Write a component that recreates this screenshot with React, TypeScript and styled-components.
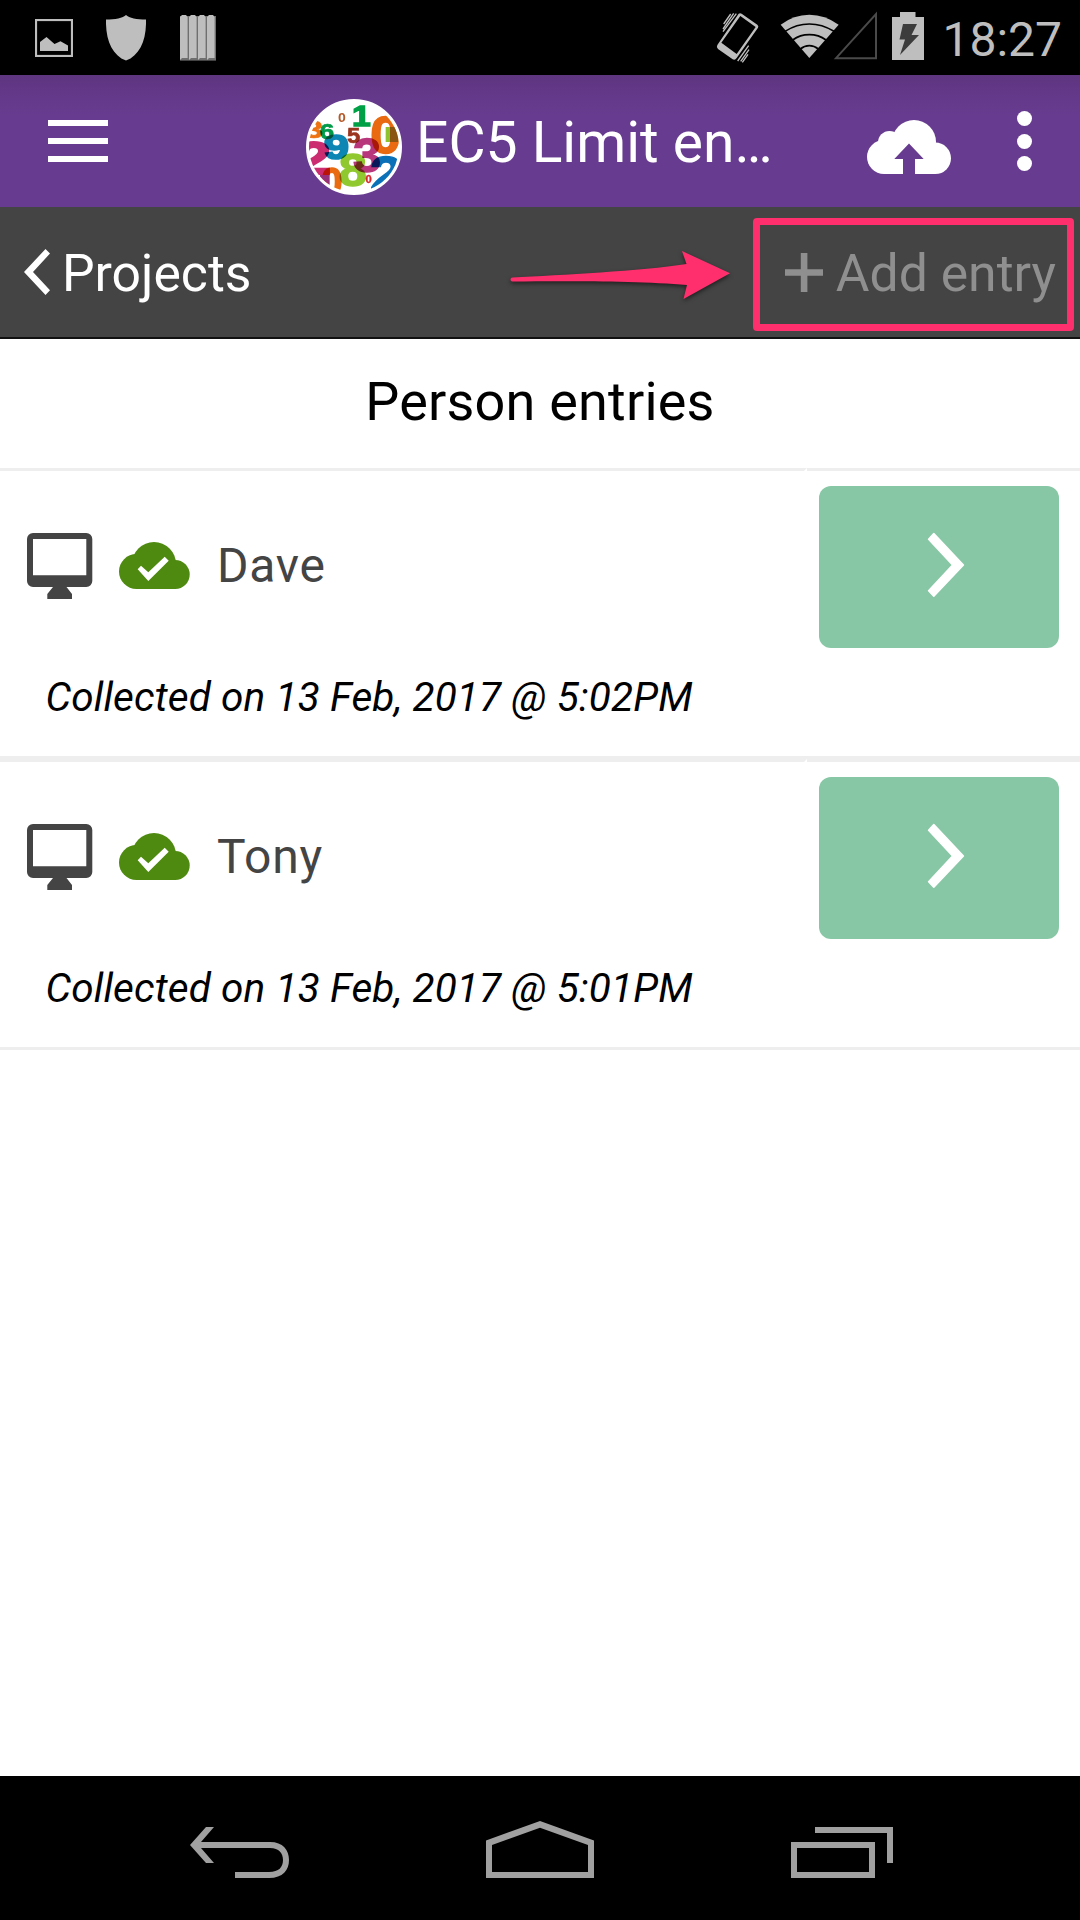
import React from "react";
import styled, { createGlobalStyle } from "styled-components";

const GlobalStyle = createGlobalStyle`
  * { box-sizing: border-box; }
  body { margin: 0; background: #fff; }
`;

const Screen = styled.div`
  display: flex;
  flex-direction: column;
  width: 1080px;
  height: 1920px;
  background: #fff;
  color: #000;
  font-family: Roboto, "Noto Sans", sans-serif;
  overflow: hidden;
  white-space: nowrap;
`;

const Icon = styled.svg`
  display: block;
  flex: none;
`;

const StatusBar = styled.div`
  display: flex;
  justify-content: space-between;
  flex: none;
  height: 75px;
  padding: 0 18px 0 35px;
  background: #000;
`;

const StatusGroup = styled.div`
  display: flex;
  align-items: flex-start;
`;

const StatusSlot = styled.div<{ $top: number; $gap?: number }>`
  padding-top: ${(p) => p.$top}px;
  margin-left: ${(p) => p.$gap ?? 0}px;
`;

const Clock = styled.div`
  margin-left: 18px;
  padding-top: 5px;
  font-size: 48px;
  line-height: 70px;
  color: #bebebe;
`;

const Header = styled.header`
  display: flex;
  align-items: center;
  flex: none;
  height: 132px;
  padding: 0 48px;
  background: linear-gradient(#5e357f 0, #633889 18px, #673b8f 40px);
  color: #fff;
`;

const MenuButton = styled.div`
  display: flex;
  flex-direction: column;
  gap: 12px;
  width: 60px;
`;

const MenuLine = styled.span`
  height: 6px;
  background: #fff;
`;

const Logo = styled.div`
  flex: none;
  width: 96px;
  height: 96px;
  margin: 12px 0 0 198px;
  border: 3px solid #fff;
  border-radius: 50%;
  background: #fff;
  overflow: hidden;
  isolation: isolate;
`;

const Digit = styled.text`
  font-family: "Liberation Sans", Arial, sans-serif;
  font-weight: 700;
  mix-blend-mode: multiply;
`;

const Title = styled.h1`
  width: 370px;
  margin: 4px 0 0 14px;
  font-size: 57px;
  font-weight: 400;
  line-height: 68px;
`;

const UploadButton = styled.div`
  margin: 12px 0 0 81px;
`;

const MoreButton = styled.div`
  display: flex;
  flex-direction: column;
  gap: 7.5px;
  margin-left: 66px;
`;

const Dot = styled.span`
  width: 15px;
  height: 15px;
  border-radius: 50%;
  background: #fff;
`;

const SubBar = styled.nav`
  position: relative;
  display: flex;
  justify-content: space-between;
  align-items: center;
  flex: none;
  height: 132px;
  padding: 0 24px;
  border-bottom: 2px solid #111;
  background: #444;
`;

const BarLink = styled.div<{ $dim?: boolean; $gap: number }>`
  display: flex;
  align-items: center;
  gap: ${(p) => p.$gap}px;
  color: ${(p) => (p.$dim ? "#8f8f8f" : "#fff")};
`;

const BarLabel = styled.span`
  padding-top: 3px;
  font-size: 51.7px;
  line-height: 64px;
`;

const Highlight = styled.div`
  position: absolute;
  left: 753px;
  top: 11px;
  width: 321px;
  height: 113px;
  border: 7px solid #ff2f6e;
  border-radius: 4px;
`;

const Pointer = styled.div`
  position: absolute;
  left: 505px;
  top: 38px;
  filter: drop-shadow(0 2px 2px rgba(0, 0, 0, 0.55));
`;

const ListTitle = styled.h2`
  flex: none;
  height: 129px;
  margin: 0;
  padding-bottom: 4px;
  font-size: 54px;
  font-weight: 400;
  line-height: 125px;
  letter-spacing: 0.2px;
  text-align: center;
`;

const Entry = styled.article`
  display: flex;
  flex: none;
  height: 291px;
  border-bottom: 3px solid #eee;
`;

const EntryMain = styled.div`
  width: 807px;
  border-top: 3px solid #eee;
  border-right: 3px solid #fff;
`;

const EntryHead = styled.div`
  display: flex;
  align-items: flex-start;
  height: 188px;
  padding: 62px 0 0 27px;
`;

const SyncedSlot = styled.div`
  margin: 9px 0 0 26px;
`;

const EntryName = styled.div`
  margin-left: 27px;
  padding-top: 4px;
  font-size: 48px;
  line-height: 58px;
  letter-spacing: 0.8px;
  color: #444;
`;

const Collected = styled.div`
  padding-left: 45.5px;
  font-size: 40.5px;
  font-style: italic;
  line-height: 76px;
  letter-spacing: 0.13px;
`;

const EntryAction = styled.div`
  flex: 1;
  padding: 15px 21px 0 12px;
  border-top: 3px solid #eee;
`;

const OpenButton = styled.div`
  display: flex;
  align-items: center;
  height: 162px;
  padding: 0 0 5px 108px;
  border-radius: 12px;
  background: #88c7a5;
`;

const Spacer = styled.div`
  flex: 1;
`;

const NavBar = styled.footer`
  display: flex;
  flex: none;
  align-items: flex-end;
  gap: 197px;
  height: 144px;
  padding: 0 0 42px 190px;
  background: #000;
`;

/* x is the left edge of the glyph, w its drawn width, b the extra boldness */
const digits = [
  { t: "3", x: 18, y: 145, s: 74, w: 47, c: "#ee7211", b: 2 },
  { t: "0", x: 116, y: 95, s: 39, w: 20, c: "#b3592a", b: 0 },
  { t: "1", x: 160, y: 107, s: 88, w: 48, c: "#00a047", b: 4 },
  { t: "0", x: 217, y: 188, s: 158, w: 80, c: "#e96a10", b: 4 },
  { t: "6", x: 62, y: 148, s: 68, w: 37, c: "#009a49", b: 2 },
  { t: "5", x: 144, y: 159, s: 65, w: 34, c: "#9a3520", b: 2 },
  { t: "2", x: -2, y: 252, s: 140, w: 88, c: "#cb2d70", b: 6 },
  { t: "9", x: 77, y: 206, s: 104, w: 65, c: "#0d86b4", b: 5 },
  { t: "8", x: 122, y: 288, s: 138, w: 72, c: "#90c92f", b: 4 },
  { t: "3", x: 165, y: 247, s: 146, w: 72, c: "#b8377c", b: 4 },
  { t: "2", x: 216, y: 306, s: 152, w: 84, c: "#0a70b8", b: 4 },
  { t: "0", x: 68, y: 316, s: 118, w: 54, c: "#e96a10", b: 5 },
  { t: "0", x: 198, y: 279, s: 31, w: 16, c: "#d9252b", b: 1 },
];

function NumbersLogo() {
  return (
    <Logo>
      <Icon width="90" height="90" viewBox="27 36 270 270">
        {digits.map((d, i) => {
          const k = d.w / (0.475 * d.s);
          return (
            <Digit
              key={i}
              transform={`translate(${d.x - 0.04 * d.s * k} ${d.y}) scale(${k} 1)`}
              fontSize={d.s}
              fill={d.c}
              stroke={d.c}
              strokeWidth={d.b}
            >
              {d.t}
            </Digit>
          );
        })}
        <rect x="257" y="111" width="14" height="45" fill="#8fc22f" />
        <rect x="270" y="111" width="25" height="45" fill="#8a5510" />
        <rect x="60" y="255" width="29" height="50" fill="#96307a" />
      </Icon>
    </Logo>
  );
}

function EntryRow({ name, collected }: { name: string; collected: string }) {
  return (
    <Entry>
      <EntryMain>
        <EntryHead>
          <Icon width="66" height="66" viewBox="0 0 66 66" fill="#444">
            <path
              fillRule="evenodd"
              d="M6 0H59.3A6 6 0 0 1 65.3 6V48A6 6 0 0 1 59.3 54H39.5L45 61V66H20.3V61L26 54H6A6 6 0 0 1 0 48V6A6 6 0 0 1 6 0ZM6 6V42.3H59.3V6Z"
            />
          </Icon>
          <SyncedSlot>
            <Icon width="71" height="47" viewBox="0 0 71 47" fill="#4f8a10">
              <circle cx="17.5" cy="29.5" r="17.5" />
              <circle cx="35" cy="22" r="22" />
              <circle cx="56.2" cy="32.5" r="14.5" />
              <rect x="17" y="24" width="39.5" height="23" />
              <path fill="#fff" d="M18.7 27.3 22 23.7 29.3 30.3 45.7 14.7 49.7 18.7 29.3 39Z" />
            </Icon>
          </SyncedSlot>
          <EntryName>{name}</EntryName>
        </EntryHead>
        <Collected>{collected}</Collected>
      </EntryMain>
      <EntryAction>
        <OpenButton>
          <Icon width="38" height="66" viewBox="0 0 38 66">
            <path
              fill="#fff"
              stroke="#fff"
              strokeWidth="1.6"
              strokeLinejoin="round"
              d="M6.8 1.6 36.4 33 6.8 64.2 1.6 58.8 25.6 33 1.6 7.2Z"
            />
          </Icon>
        </OpenButton>
      </EntryAction>
    </Entry>
  );
}

export default function App() {
  return (
    <Screen>
      <GlobalStyle />
      <StatusBar>
        <StatusGroup>
          <StatusSlot $top={19}>
            <Icon width="38" height="38" viewBox="0 0 38 38">
              <rect x="1" y="1" width="36" height="36" fill="none" stroke="#bebebe" strokeWidth="2.2" />
              <path fill="#bebebe" d="M5 32V23L11.5 18 19.5 25 25.5 22.3 33 26.5V32Z" />
            </Icon>
          </StatusSlot>
          <StatusSlot $top={15} $gap={33}>
            <Icon width="40" height="46" viewBox="0 0 40 46" fill="#bebebe">
              <path d="M20 0C23 3 31 4.6 40 4.6 40.5 25 34 40 20 45.6 6 40 -.5 25 0 4.6 9 4.6 17 3 20 0Z" />
            </Icon>
          </StatusSlot>
          <StatusSlot $top={15} $gap={34}>
            <Icon width="36" height="46" viewBox="0 0 36 46">
              {[0, 9, 18, 27].map((x) => (
                <g key={x}>
                  <rect x={x} y="1" width="9" height="44.6" fill="#6f6f6f" />
                  <path fill="#bebebe" d={`M${x} 2 ${x + 2} 0H${x + 6}L${x + 7.6} 2V43H${x + 2}L${x} 45Z`} />
                </g>
              ))}
            </Icon>
          </StatusSlot>
        </StatusGroup>
        <StatusGroup>
          <StatusSlot $top={12}>
            <Icon width="43" height="51" viewBox="50 36 129 153">
              <path
                fill="#bebebe"
                fillRule="evenodd"
                d="M118 41Q122 38 127 41L174 74Q179 78 176 83L112 174Q107 182 100 178L56 147Q50 142 54 135ZM123 48 66 128 112 162 169 81Z"
              />
              <path
                stroke="#bebebe"
                strokeWidth="4"
                fill="none"
                d="M94 42 73 72M103 40 71 87M111 41 71 95M148 137 115 183M149 149 124 184M146 163 129 187"
              />
            </Icon>
          </StatusSlot>
          <StatusSlot $top={14} $gap={21}>
            <Icon width="60" height="45" viewBox="240 42 180 135">
              <path fill="#bebebe" d="M328 174 242 74Q281 44 328 44T416 74Z" />
              <path
                fill="none"
                stroke="#000"
                strokeWidth="5"
                d="M255 94Q290 72 328 72T402 94M278 120Q300 104 328 104T378 120M301 147Q313 137 328 137T355 147"
              />
            </Icon>
          </StatusSlot>
          <StatusSlot $top={11} $gap={-7}>
            <Icon width="45" height="49" viewBox="0 0 45 49">
              <path fill="none" stroke="#4a4a4a" strokeWidth="2" d="M43 3V47.2H3Z" />
            </Icon>
          </StatusSlot>
          <StatusSlot $top={12} $gap={14}>
            <Icon width="32" height="48" viewBox="0 0 32 48">
              <path fill="#bebebe" d="M8 0H23.5V5H32V48H0V5H8Z" />
              <path fill="#3c3c3c" d="M11 12H25L19.5 23H27L8 43 13 27.5H7.5Z" />
            </Icon>
          </StatusSlot>
          <Clock>18:27</Clock>
        </StatusGroup>
      </StatusBar>

      <Header>
        <MenuButton>
          <MenuLine />
          <MenuLine />
          <MenuLine />
        </MenuButton>
        <NumbersLogo />
        <Title>EC5 Limit en…</Title>
        <UploadButton>
          <Icon width="84" height="54" viewBox="0 0 84 54" fill="#fff">
            <circle cx="17" cy="37" r="17" />
            <circle cx="22.5" cy="22.5" r="11.5" />
            <circle cx="47" cy="22" r="22" />
            <circle cx="68.3" cy="38.3" r="15.7" />
            <rect x="17" y="24" width="51" height="30" />
            <path fill="#673b8f" d="M42 23.5 56.7 39H48V54H36V39H27.3Z" />
          </Icon>
        </UploadButton>
        <MoreButton>
          <Dot />
          <Dot />
          <Dot />
        </MoreButton>
      </Header>

      <SubBar>
        <BarLink $gap={12}>
          <Icon width="26" height="46" viewBox="0 0 26 46">
            <path fill="#fff" d="M21.5 0 26 4.5 9 23 26 41.2 21.5 46 0 23Z" />
          </Icon>
          <BarLabel>Projects</BarLabel>
        </BarLink>
        <BarLink $gap={13} $dim>
          <Icon width="38" height="39" viewBox="0 0 38 39">
            <path fill="#8f8f8f" d="M15.8 0H22.4V16.3H38V22.7H22.4V39H15.8V22.7H0V16.3H15.8Z" />
          </Icon>
          <BarLabel>Add entry</BarLabel>
        </BarLink>
        <Highlight />
        <Pointer>
          <Icon width="230" height="60" viewBox="504 245 230 60">
            <path
              fill="#ff2f6e"
              d="M511.5 277.5C560 275 640 271 685.5 264L681 251 729 273.3 682.5 299 686 285C640 281 570 281 511.5 281.5A2 2 0 0 1 511.5 277.5Z"
            />
          </Icon>
        </Pointer>
      </SubBar>

      <ListTitle>Person entries</ListTitle>
      <EntryRow name="Dave" collected="Collected on 13 Feb, 2017 @ 5:02PM" />
      <EntryRow name="Tony" collected="Collected on 13 Feb, 2017 @ 5:01PM" />
      <Spacer />

      <NavBar>
        <Icon width="99" height="51" viewBox="190 1827 99 51">
          <path
            fill="#a0a0a0"
            d="M206 1827H214L201 1842H270C283 1842 289 1850 289 1860S283 1878 269 1878H235V1872H269C279 1872 283 1867 283 1860S279 1848 270 1848H201L214 1863H206L190 1845Z"
          />
        </Icon>
        <Icon width="108" height="57" viewBox="486 1821 108 57">
          <path
            fill="#a0a0a0"
            fillRule="evenodd"
            d="M540 1821 594 1840.5V1878H486V1840.5ZM540 1827.7 492 1845V1872H588V1845Z"
          />
        </Icon>
        <Icon width="102" height="51" viewBox="792 1827 102 51">
          <path
            fill="#a0a0a0"
            fillRule="evenodd"
            d="M816 1827H894V1863H888V1833H816ZM792 1842H876V1878H792ZM798 1848V1872H870V1848Z"
          />
        </Icon>
      </NavBar>
    </Screen>
  );
}
